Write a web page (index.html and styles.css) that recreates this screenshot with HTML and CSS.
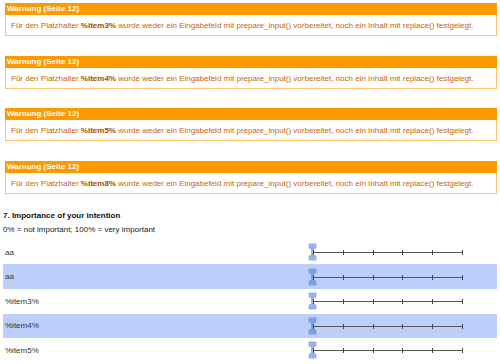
FILE: index.html
```html
<!DOCTYPE html>
<html lang="de">
<head>
    <meta charset="UTF-8">
    <title>Fragebogen Seite 12</title>
    <link rel="stylesheet" href="styles.css">
</head>
<body>
    <div class="warnings">
        <div class="warning">
            <div class="warning-title">Warnung (Seite 12)</div>
            <div class="warning-text">Für den Platzhalter <strong>%item3%</strong> wurde weder ein Eingabefeld mit prepare_input() vorbereitet, noch ein Inhalt mit replace() festgelegt.</div>
        </div>
        <div class="warning">
            <div class="warning-title">Warnung (Seite 12)</div>
            <div class="warning-text">Für den Platzhalter <strong>%item4%</strong> wurde weder ein Eingabefeld mit prepare_input() vorbereitet, noch ein Inhalt mit replace() festgelegt.</div>
        </div>
        <div class="warning">
            <div class="warning-title">Warnung (Seite 12)</div>
            <div class="warning-text">Für den Platzhalter <strong>%item5%</strong> wurde weder ein Eingabefeld mit prepare_input() vorbereitet, noch ein Inhalt mit replace() festgelegt.</div>
        </div>
        <div class="warning">
            <div class="warning-title">Warnung (Seite 12)</div>
            <div class="warning-text">Für den Platzhalter <strong>%item8%</strong> wurde weder ein Eingabefeld mit prepare_input() vorbereitet, noch ein Inhalt mit replace() festgelegt.</div>
        </div>
    </div>

    <div class="question">
        <div class="question-title">7. Importance of your intention</div>
        <div class="question-hint">0% = not important; 100% = very important</div>

        <div class="scale-row">
            <div class="scale-label">aa</div>
            <div class="slider">
                <svg class="handle" width="9" height="18" viewBox="0 0 9 18"><path d="M1.5 0.5h6a1 1 0 0 1 1 1v2.5a2 2 0 0 1 -2 2h-0.5v6h0.5a2 2 0 0 1 2 2v2.5a1 1 0 0 1 -1 1h-6a1 1 0 0 1 -1 -1v-2.5a2 2 0 0 1 2 -2h0.5v-6h-0.5a2 2 0 0 1 -2 -2v-2.5a1 1 0 0 1 1 -1z"/></svg>
                <div class="ticks"><span></span><span></span><span></span><span></span><span></span><span></span></div>
            </div>
        </div>
        <div class="scale-row shaded">
            <div class="scale-label">aa</div>
            <div class="slider">
                <svg class="handle" width="9" height="18" viewBox="0 0 9 18"><path d="M1.5 0.5h6a1 1 0 0 1 1 1v2.5a2 2 0 0 1 -2 2h-0.5v6h0.5a2 2 0 0 1 2 2v2.5a1 1 0 0 1 -1 1h-6a1 1 0 0 1 -1 -1v-2.5a2 2 0 0 1 2 -2h0.5v-6h-0.5a2 2 0 0 1 -2 -2v-2.5a1 1 0 0 1 1 -1z"/></svg>
                <div class="ticks"><span></span><span></span><span></span><span></span><span></span><span></span></div>
            </div>
        </div>
        <div class="scale-row">
            <div class="scale-label">%item3%</div>
            <div class="slider">
                <svg class="handle" width="9" height="18" viewBox="0 0 9 18"><path d="M1.5 0.5h6a1 1 0 0 1 1 1v2.5a2 2 0 0 1 -2 2h-0.5v6h0.5a2 2 0 0 1 2 2v2.5a1 1 0 0 1 -1 1h-6a1 1 0 0 1 -1 -1v-2.5a2 2 0 0 1 2 -2h0.5v-6h-0.5a2 2 0 0 1 -2 -2v-2.5a1 1 0 0 1 1 -1z"/></svg>
                <div class="ticks"><span></span><span></span><span></span><span></span><span></span><span></span></div>
            </div>
        </div>
        <div class="scale-row shaded">
            <div class="scale-label">%item4%</div>
            <div class="slider">
                <svg class="handle" width="9" height="18" viewBox="0 0 9 18"><path d="M1.5 0.5h6a1 1 0 0 1 1 1v2.5a2 2 0 0 1 -2 2h-0.5v6h0.5a2 2 0 0 1 2 2v2.5a1 1 0 0 1 -1 1h-6a1 1 0 0 1 -1 -1v-2.5a2 2 0 0 1 2 -2h0.5v-6h-0.5a2 2 0 0 1 -2 -2v-2.5a1 1 0 0 1 1 -1z"/></svg>
                <div class="ticks"><span></span><span></span><span></span><span></span><span></span><span></span></div>
            </div>
        </div>
        <div class="scale-row">
            <div class="scale-label">%item5%</div>
            <div class="slider">
                <svg class="handle" width="9" height="18" viewBox="0 0 9 18"><path d="M1.5 0.5h6a1 1 0 0 1 1 1v2.5a2 2 0 0 1 -2 2h-0.5v6h0.5a2 2 0 0 1 2 2v2.5a1 1 0 0 1 -1 1h-6a1 1 0 0 1 -1 -1v-2.5a2 2 0 0 1 2 -2h0.5v-6h-0.5a2 2 0 0 1 -2 -2v-2.5a1 1 0 0 1 1 -1z"/></svg>
                <div class="ticks"><span></span><span></span><span></span><span></span><span></span><span></span></div>
            </div>
        </div>
    </div>
</body>
</html>
```

FILE: styles.css
```css
body {
    font-family: 'Liberation Sans', Arial, sans-serif;
    font-size: 8px;
    margin: 0;
    padding: 3px 3px 0 3px;
    background: white;
    color: #333;
    overflow: hidden;
}
.warnings {
    display: flex;
    flex-direction: column;
    gap: 19.7px;
    margin-left: 2px;
}
.warning {
    border: 1px solid #ffc46a;
    border-top: none;
    background: white;
}
.warning-title {
    background: #ff9900;
    color: white;
    font-weight: bold;
    height: 12px;
    line-height: 12px;
    padding-left: 2px;
    margin: 0 -1px;
}
.warning-text {
    color: #c8640a;
    padding: 6px 5px 4px 5px;
    line-height: 10px;
    white-space: nowrap;
}
.warning-text strong {
    color: #a04d00;
}
.question {
    margin-top: 16px;
}
.question-title {
    font-weight: bold;
    color: #111;
    line-height: 12px;
}
.question-hint {
    color: #222;
    line-height: 12px;
    margin: 2px 0 3.7px;
}
.scale-row {
    display: grid;
    grid-template-columns: 305px 160px;
    align-items: center;
    height: 24.6px;
}
.scale-row.shaded {
    background: #bccffb;
}
.scale-label {
    padding-left: 2px;
}
.slider {
    position: relative;
    height: 18px;
}
.ticks {
    position: absolute;
    left: 5px;
    top: 7px;
    width: 150px;
    height: 5px;
    display: flex;
    justify-content: space-between;
    background: linear-gradient(#555, #555) 0 2px / 100% 1px no-repeat;
}
.ticks span {
    width: 1px;
    height: 5px;
    background: #444;
}
.handle {
    position: absolute;
    left: 0;
    top: 0;
    fill: #9ab0ee;
}
.shaded .handle {
    fill: #7f9be2;
}
```
